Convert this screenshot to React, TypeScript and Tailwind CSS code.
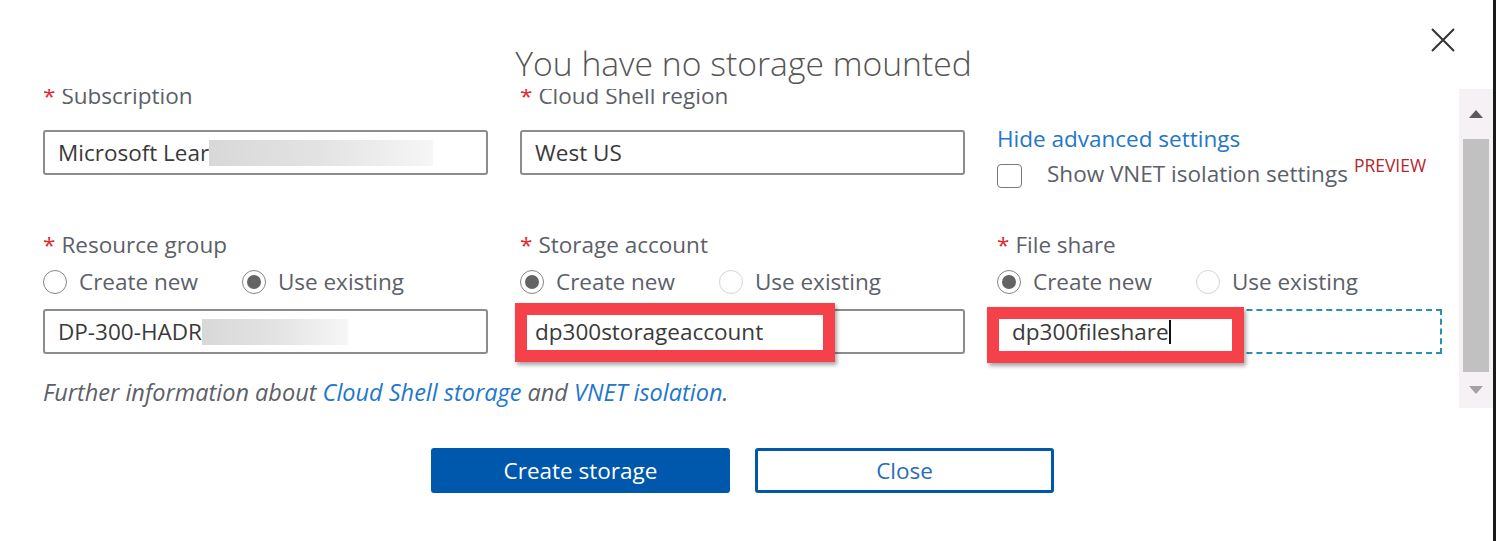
import React from 'react'

const font = 'font-["Open_Sans",sans-serif]'

const Label = ({ text }: { text: string }) => (
  <div className="h-[28px] flex items-center text-[22.5px] text-[#5c6068] whitespace-nowrap">
    <span className="text-[#e3262f] mr-[6px]">*</span>
    {text}
  </div>
)

const Radio = ({ checked, light, label }: { checked?: boolean; light?: boolean; label: string }) => (
  <div className="h-[28px] flex items-center">
    <span
      className={`w-[24px] h-[24px] rounded-full border-[1.5px] flex items-center justify-center ${
        light ? 'border-[#d4d4d4]' : 'border-[#858585]'
      }`}
    >
      {checked && <span className="w-[14px] h-[14px] rounded-full bg-[#646464]" />}
    </span>
    <span className="ml-[12px] text-[22.5px] leading-[28px] text-[#5c6068] whitespace-nowrap">{label}</span>
  </div>
)

const Blur = ({ w }: { w: string }) => (
  <span className={`${w} h-[26px] bg-linear-to-r from-[#d8d8d8] via-[#e3e3e3] to-[#f6f6f6]`} />
)

const inputBase = 'h-[45px] flex items-center pl-[13px] text-[22.5px] text-[#3a3a3a] whitespace-nowrap'

export default function App() {
  return (
    <div className={`w-[1496px] h-[541px] bg-white flex ${font}`}>
      <div className="flex-1 flex flex-col">
        {/* header */}
        <div className="h-[89px] relative flex justify-center">
          <h1 className="mt-[42px] -ml-[6px] text-[33.7px] leading-[42px] text-[#555] font-light whitespace-nowrap">
            You have no storage mounted
          </h1>
          <button className="absolute right-[37px] top-[27px] w-[26px] h-[26px]">
            <svg viewBox="0 0 26 26" className="w-[26px] h-[26px]">
              <path d="M2 2 L24 24 M24 2 L2 24" stroke="#333" strokeWidth="2" />
            </svg>
          </button>
        </div>

        {/* body with scrollbar */}
        <div className="flex h-[319px]">
          <div className="flex-1 overflow-hidden">
            <div className="-mt-[7px] pl-[43px] grid grid-cols-[445px_445px_445px] gap-x-[32px]">
              {/* row 1 */}
              <div className="h-[93px]">
                <Label text="Subscription" />
                <div className={`mt-[20px] border-2 border-[#8c8c8c] rounded-[3px] ${inputBase}`}>
                  Microsoft Lear
                  <Blur w="w-[224px]" />
                </div>
              </div>
              <div className="h-[93px]">
                <Label text="Cloud Shell region" />
                <div className={`mt-[20px] border-2 border-[#8c8c8c] rounded-[3px] ${inputBase}`}>West US</div>
              </div>
              <div className="h-[93px] pt-[43px]">
                <div className="h-[28px] flex items-center text-[22.5px] text-[#2376cc]">Hide advanced settings</div>
                <div className="mt-[10px] h-[26px] flex items-center">
                  <span className="w-[25px] h-[24px] border-[1.5px] border-[#7a7a7a] rounded-[4px]" />
                  <span className="ml-[25px] -mt-[4px] text-[22.5px] leading-[28px] text-[#5c6068] whitespace-nowrap">
                    Show VNET isolation settings
                  </span>
                  <span className="ml-[6px] -mt-[22px] text-[17.5px] leading-[20px] text-[#b3262e]">PREVIEW</span>
                </div>
              </div>

              {/* row 2 */}
              <div className="mt-[56px]">
                <Label text="Resource group" />
                <div className="mt-[9px] flex gap-[44px]">
                  <Radio label="Create new" />
                  <Radio checked label="Use existing" />
                </div>
                <div className={`mt-[13px] border-2 border-[#8c8c8c] rounded-[3px] ${inputBase}`}>
                  DP-300-HADR
                  <Blur w="w-[146px]" />
                </div>
              </div>
              <div className="mt-[56px]">
                <Label text="Storage account" />
                <div className="mt-[9px] flex gap-[44px]">
                  <Radio checked label="Create new" />
                  <Radio light label="Use existing" />
                </div>
                <div className={`relative mt-[13px] border-2 border-[#8c8c8c] rounded-[3px] ${inputBase}`}>
                  dp300storageaccount
                  <span className="absolute left-[-7px] top-[-8px] w-[320px] h-[59px] border-[12px] border-[#f5424a] shadow-[2px_3px_4px_rgba(0,0,0,0.35)]" />
                </div>
              </div>
              <div className="mt-[56px]">
                <Label text="File share" />
                <div className="mt-[9px] flex gap-[44px]">
                  <Radio checked label="Create new" />
                  <Radio light label="Use existing" />
                </div>
                <div className={`relative mt-[13px] border-2 border-dashed border-[#2a8fb0] ${inputBase}`}>
                  dp300fileshare
                  <span className="w-[2px] h-[24px] bg-[#111]" />
                  <span className="absolute left-[-12px] top-[-4px] w-[257px] h-[56px] border-[12px] border-[#f5424a] shadow-[2px_3px_4px_rgba(0,0,0,0.35)]" />
                </div>
              </div>
            </div>

            <p className="mt-[25px] pl-[43px] h-[28px] flex items-center text-[23.5px] italic text-[#5c6068] whitespace-nowrap">
              Further information about&nbsp;<span className="text-[#2376cc]">Cloud Shell storage</span>&nbsp;and&nbsp;
              <span className="text-[#2376cc]">VNET isolation</span>.
            </p>
          </div>

          {/* scrollbar */}
          <div className="w-[34px] bg-[#f5f1f5] flex flex-col items-center">
            <div className="h-[50px] flex items-center justify-center">
              <svg width="14" height="8" viewBox="0 0 14 8">
                <path d="M0 8 L7 0 L14 8 Z" fill="#5a5a5a" />
              </svg>
            </div>
            <div className="w-[26px] h-[233px] bg-[#c1c1c1]" />
            <div className="flex-1 flex items-center justify-center">
              <svg width="14" height="8" viewBox="0 0 14 8">
                <path d="M0 0 L14 0 L7 8 Z" fill="#a3a3a3" />
              </svg>
            </div>
          </div>
        </div>

        {/* footer */}
        <div className="mt-[40px] flex justify-center gap-[25px] pr-[8px]">
          <button className="w-[299px] h-[45px] bg-[#0058ad] rounded-[3px] text-white text-[22.5px]">Create storage</button>
          <button className="w-[299px] h-[45px] bg-white border-[3px] border-[#0058ad] rounded-[3px] text-[#2b6cb5] text-[22.5px]">
            Close
          </button>
        </div>
      </div>
      <div className="w-[3px] bg-[#1a1a1a]" />
    </div>
  )
}
